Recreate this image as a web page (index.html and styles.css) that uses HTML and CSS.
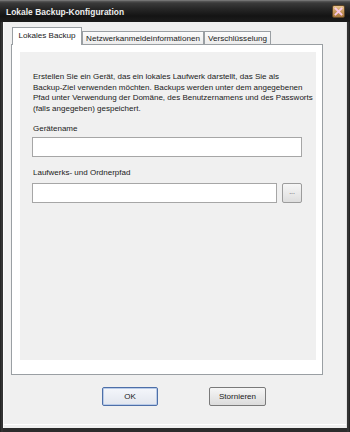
FILE: index.html
```html
<!DOCTYPE html>
<html lang="de">
<head>
<meta charset="utf-8">
<title>Lokale Backup-Konfiguration</title>
<link rel="stylesheet" href="styles.css">
</head>
<body>
<div class="window">
  <div class="titlebar">
    <span class="title">Lokale Backup-Konfiguration</span>
    <span class="close">
      <svg width="9" height="9" viewBox="0 0 9 9"><path d="M1.5 1.5 L7.5 7.5 M7.5 1.5 L1.5 7.5" stroke="#f8c8e4" stroke-width="1.8" stroke-linecap="square"/></svg>
    </span>
  </div>
  <div class="client">
    <div class="tabs">
      <div class="tab active t1">Lokales Backup</div>
      <div class="tab t2">Netzwerkanmeldeinformationen</div>
      <div class="tab t3">Verschlüsselung</div>
    </div>
    <div class="panel">
      <div class="inner">
        <p class="desc">Erstellen Sie ein Gerät, das ein lokales Laufwerk darstellt, das Sie als<br>Backup-Ziel verwenden möchten. Backups werden unter dem angegebenen<br>Pfad unter Verwendung der Domäne, des Benutzernamens und des Passworts<br>(falls angegeben) gespeichert.</p>
        <div class="label l1">Gerätename</div>
        <div class="input full"></div>
        <div class="label l2">Laufwerks- und Ordnerpfad</div>
        <div class="row">
          <div class="input path"></div>
          <div class="browse">...</div>
        </div>
      </div>
    </div>
    <div class="buttons">
      <div class="btn ok">OK</div>
      <div class="btn cancel">Stornieren</div>
    </div>
  </div>
</div>
</body>
</html>
```

FILE: styles.css
```css
html, body {
  margin: 0;
  padding: 0;
  background: #2a2a2a;
}
body {
  width: 350px;
  height: 432px;
  overflow: hidden;
  font-family: "Liberation Sans", Arial, sans-serif;
  font-size: 8px;
  color: #1a1a1a;
}
.window {
  width: 350px;
  height: 432px;
  display: flex;
  flex-direction: column;
  background: linear-gradient(to right, #1e1e1e, #3a3a3a 2px, #2c2c2c 3px, #2c2c2c 347px, #3a3a3a 348px, #1e1e1e);
  box-sizing: border-box;
}
.titlebar {
  height: 22px;
  flex: none;
  display: flex;
  align-items: center;
  justify-content: space-between;
  padding: 0 5px 0 6px;
  background: linear-gradient(#8c8c8c 0, #5a5a5a 1px, #3a3a3a 3px, #262626 9px, #141414 16px, #1c1c1c 22px);
}
.title {
  color: #ededed;
  font-weight: bold;
  font-size: 8.4px;
  letter-spacing: 0.05px;
  padding-top: 1px;
}
.close {
  width: 13px;
  height: 13px;
  box-sizing: border-box;
  border: 1px solid #5e4426;
  border-radius: 2px;
  background: linear-gradient(#e8c48e, #c7995c 50%, #a6753c);
  display: flex;
  align-items: center;
  justify-content: center;
  margin-top: 1px;
}
.close svg { display: block; }
.client {
  flex: 1;
  margin: 0 3px 4px 3px;
  background: #f0f0f0;
  box-shadow: inset 1px 0 0 #fafafa, inset -1px 0 0 #e2e2e2, inset 0 -3px 0 #f0f0f0, inset 0 -4px 0 #ffffff;
  display: flex;
  flex-direction: column;
  padding-top: 6px;
}
.tabs {
  display: flex;
  align-items: flex-end;
  height: 17px;
  padding-left: 9px;
  margin-bottom: -1px;
  position: relative;
  z-index: 1;
}
.tab {
  box-sizing: border-box;
  height: 13px;
  border: 1px solid #9a9fa3;
  border-bottom: none;
  background: linear-gradient(#fbfbfb, #ececec);
  display: flex;
  align-items: center;
  justify-content: center;
  font-size: 8.1px;
  white-space: nowrap;
  margin-bottom: 1px;
}
.tab.active {
  height: 18px;
  background: #ffffff;
  margin-bottom: 0;
  padding-bottom: 2px;
}
.t1 { width: 70px; }
.t2 { width: 122px; }
.t3 { width: 67px; }
.panel {
  box-sizing: border-box;
  margin-left: 8px;
  width: 312px;
  height: 331px;
  border: 1px solid #9a9fa3;
  background: #ffffff;
  padding: 7px 6px 14px 8px;
  display: flex;
  flex-direction: column;
}
.inner {
  flex: 1;
  background: #f0f0f0;
  padding: 20px 14px 0 12px;
}
.desc {
  margin: 0;
  line-height: 10.7px;
  white-space: nowrap;
  padding-left: 1px;
}
.label {
  line-height: 11px;
  padding-left: 1px;
}
.l1 { margin-top: 8px; }
.l2 { margin-top: 10.5px; }
.input {
  box-sizing: border-box;
  height: 20px;
  background: #ffffff;
  border: 1px solid #a6a6a6;
}
.full { margin-top: 3px; }
.row {
  display: flex;
  margin-top: 4.5px;
  gap: 5px;
}
.path { width: 247px; }
.browse {
  box-sizing: border-box;
  width: 20px;
  height: 20px;
  border: 1px solid #9c9c9c;
  border-radius: 2px;
  background: linear-gradient(#f6f6f6, #dedede);
  display: flex;
  align-items: center;
  justify-content: center;
  font-size: 7px;
  color: #555;
  padding-bottom: 2px;
}
.buttons {
  display: flex;
  margin-top: 12px;
  padding-left: 99px;
  gap: 51px;
}
.btn {
  box-sizing: border-box;
  height: 19px;
  border-radius: 2px;
  display: flex;
  align-items: center;
  justify-content: center;
  font-size: 8px;
}
.ok {
  width: 56px;
  border: 1px solid #4d6fa8;
  background: linear-gradient(#f4f6fb, #e2e6ee);
  box-shadow: inset 0 0 0 1px #b9cbe8;
}
.cancel {
  width: 57px;
  border: 1px solid #7a7a7a;
  background: linear-gradient(#f6f6f6, #dcdcdc);
}
```
